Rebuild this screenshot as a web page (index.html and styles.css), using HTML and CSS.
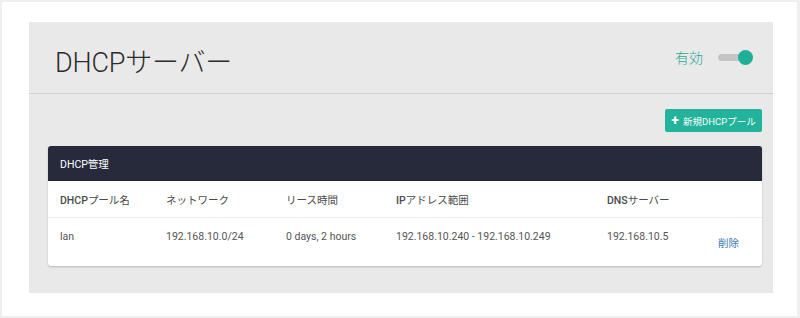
FILE: index.html
```html
<!DOCTYPE html>
<html lang="ja">
<head>
<meta charset="utf-8">
<title>DHCPサーバー</title>
<link rel="stylesheet" href="styles.css">
</head>
<body>
<div class="frame">
  <section class="panel">
    <header class="panel-head">
      <h1 class="title">DHCPサーバー</h1>
      <div class="status">
        <span class="status-label">有効</span>
        <span class="toggle"><span class="knob"></span></span>
      </div>
    </header>
    <div class="panel-body">
      <div class="actions">
        <button class="btn-add"><span class="plus">+</span>新規DHCPプール</button>
      </div>
      <div class="card">
        <div class="card-head">DHCP管理</div>
        <div class="row head-row">
          <div class="cell"><b>DHCP</b>プール名</div>
          <div class="cell">ネットワーク</div>
          <div class="cell">リース時間</div>
          <div class="cell"><b>IP</b>アドレス範囲</div>
          <div class="cell"><b>DNS</b>サーバー</div>
          <div class="cell"></div>
        </div>
        <div class="row data-row">
          <div class="cell">lan</div>
          <div class="cell">192.168.10.0/24</div>
          <div class="cell">0 days, 2 hours</div>
          <div class="cell">192.168.10.240 - 192.168.10.249</div>
          <div class="cell">192.168.10.5</div>
          <div class="cell"><a class="del">削除</a></div>
        </div>
      </div>
    </div>
  </section>
</div>
</body>
</html>
```

FILE: styles.css
```css
html, body {
  margin: 0;
  padding: 0;
}
body {
  background: #efefef;
  padding: 2px 3px 2px 2px;
  font-family: Roboto, "Noto Sans CJK JP", sans-serif;
  color: #444;
}
.frame {
  background: #fff;
  height: 314px;
  box-sizing: border-box;
  padding: 20px 24px 23px 27px;
}
.panel {
  background: #e9e9e9;
  height: 271px;
  display: flex;
  flex-direction: column;
}
.panel-head {
  height: 71px;
  border-bottom: 1px solid #cfcfcf;
  display: flex;
  align-items: center;
  justify-content: space-between;
  padding: 0 20px 0 26px;
}
.title {
  margin: 0;
  font-size: 27px;
  font-weight: 300;
  color: #2b2b2b;
  letter-spacing: -0.2px;
  padding-top: 6px;
}
.status {
  display: flex;
  align-items: center;
  gap: 15px;
  padding-bottom: 1px;
}
.status-label {
  color: #2aa896;
  font-size: 14px;
  font-weight: 300;
}
.toggle {
  position: relative;
  width: 28px;
  height: 7px;
  border-radius: 4px;
  background: #c4c4c4;
  margin-right: 7px;
}
.knob {
  position: absolute;
  right: -7px;
  top: -4px;
  width: 15px;
  height: 15px;
  border-radius: 50%;
  background: #1fae96;
}
.panel-body {
  padding: 15px 11px 0 19px;
}
.actions {
  display: flex;
  justify-content: flex-end;
}
.btn-add {
  height: 23px;
  width: 97px;
  border: none;
  border-radius: 2px;
  background: #23b29b;
  color: #fff;
  font-family: inherit;
  font-size: 9.5px;
  display: flex;
  align-items: center;
  justify-content: center;
  gap: 4px;
  padding: 0;
}
.plus {
  font-size: 14px;
  font-weight: 700;
  line-height: 1;
  margin-top: -1px;
}
.card {
  margin-top: 14px;
  background: #fff;
  border-radius: 3px;
  box-shadow: 0 1px 2px rgba(0,0,0,0.22);
  overflow: hidden;
  height: 120px;
}
.card-head {
  background: #262a3b;
  color: #fff;
  height: 35px;
  display: flex;
  align-items: center;
  padding-left: 12px;
  font-size: 10.5px;
}
.row {
  display: grid;
  grid-template-columns: 106px 120px 110px 211px 111px 1fr;
  padding-left: 12px;
  font-size: 10.5px;
}
.head-row {
  height: 36px;
  align-items: center;
  border-bottom: 1px solid #ececec;
  color: #4a4a4a;
}
.head-row b {
  font-weight: 500;
}
.data-row {
  color: #555;
  padding-top: 12px;
}
.del {
  display: inline-block;
  color: #3a78ab;
  margin-top: 5px;
}
```
